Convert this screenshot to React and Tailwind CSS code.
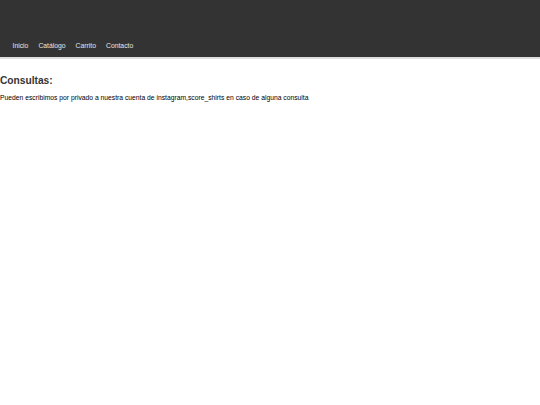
export default function App() {
  return (
    <div className="min-h-[405px] bg-white" style={{ fontFamily: '"Liberation Sans", Arial, sans-serif' }}>
      <header className="h-[59px] bg-[#333333] border-b-2 border-[#dddddd] flex items-end pb-[7px] pl-[12.5px]">
        <nav className="flex gap-[10px] text-[6.8px] leading-none text-[#e5e5e5]">
          <a>Inicio</a>
          <a>Catálogo</a>
          <a>Carrito</a>
          <a>Contacto</a>
        </nav>
      </header>
      <main className="pt-[17px]">
        <h2 className="text-[10.2px] font-bold text-[#333333] leading-none">Consultas:</h2>
        <p className="mt-[9px] text-[6.75px] text-black leading-none">
          Pueden escribimos por privado a nuestra cuenta de instagram,score_shirts en caso de alguna consulta
        </p>
      </main>
    </div>
  );
}
